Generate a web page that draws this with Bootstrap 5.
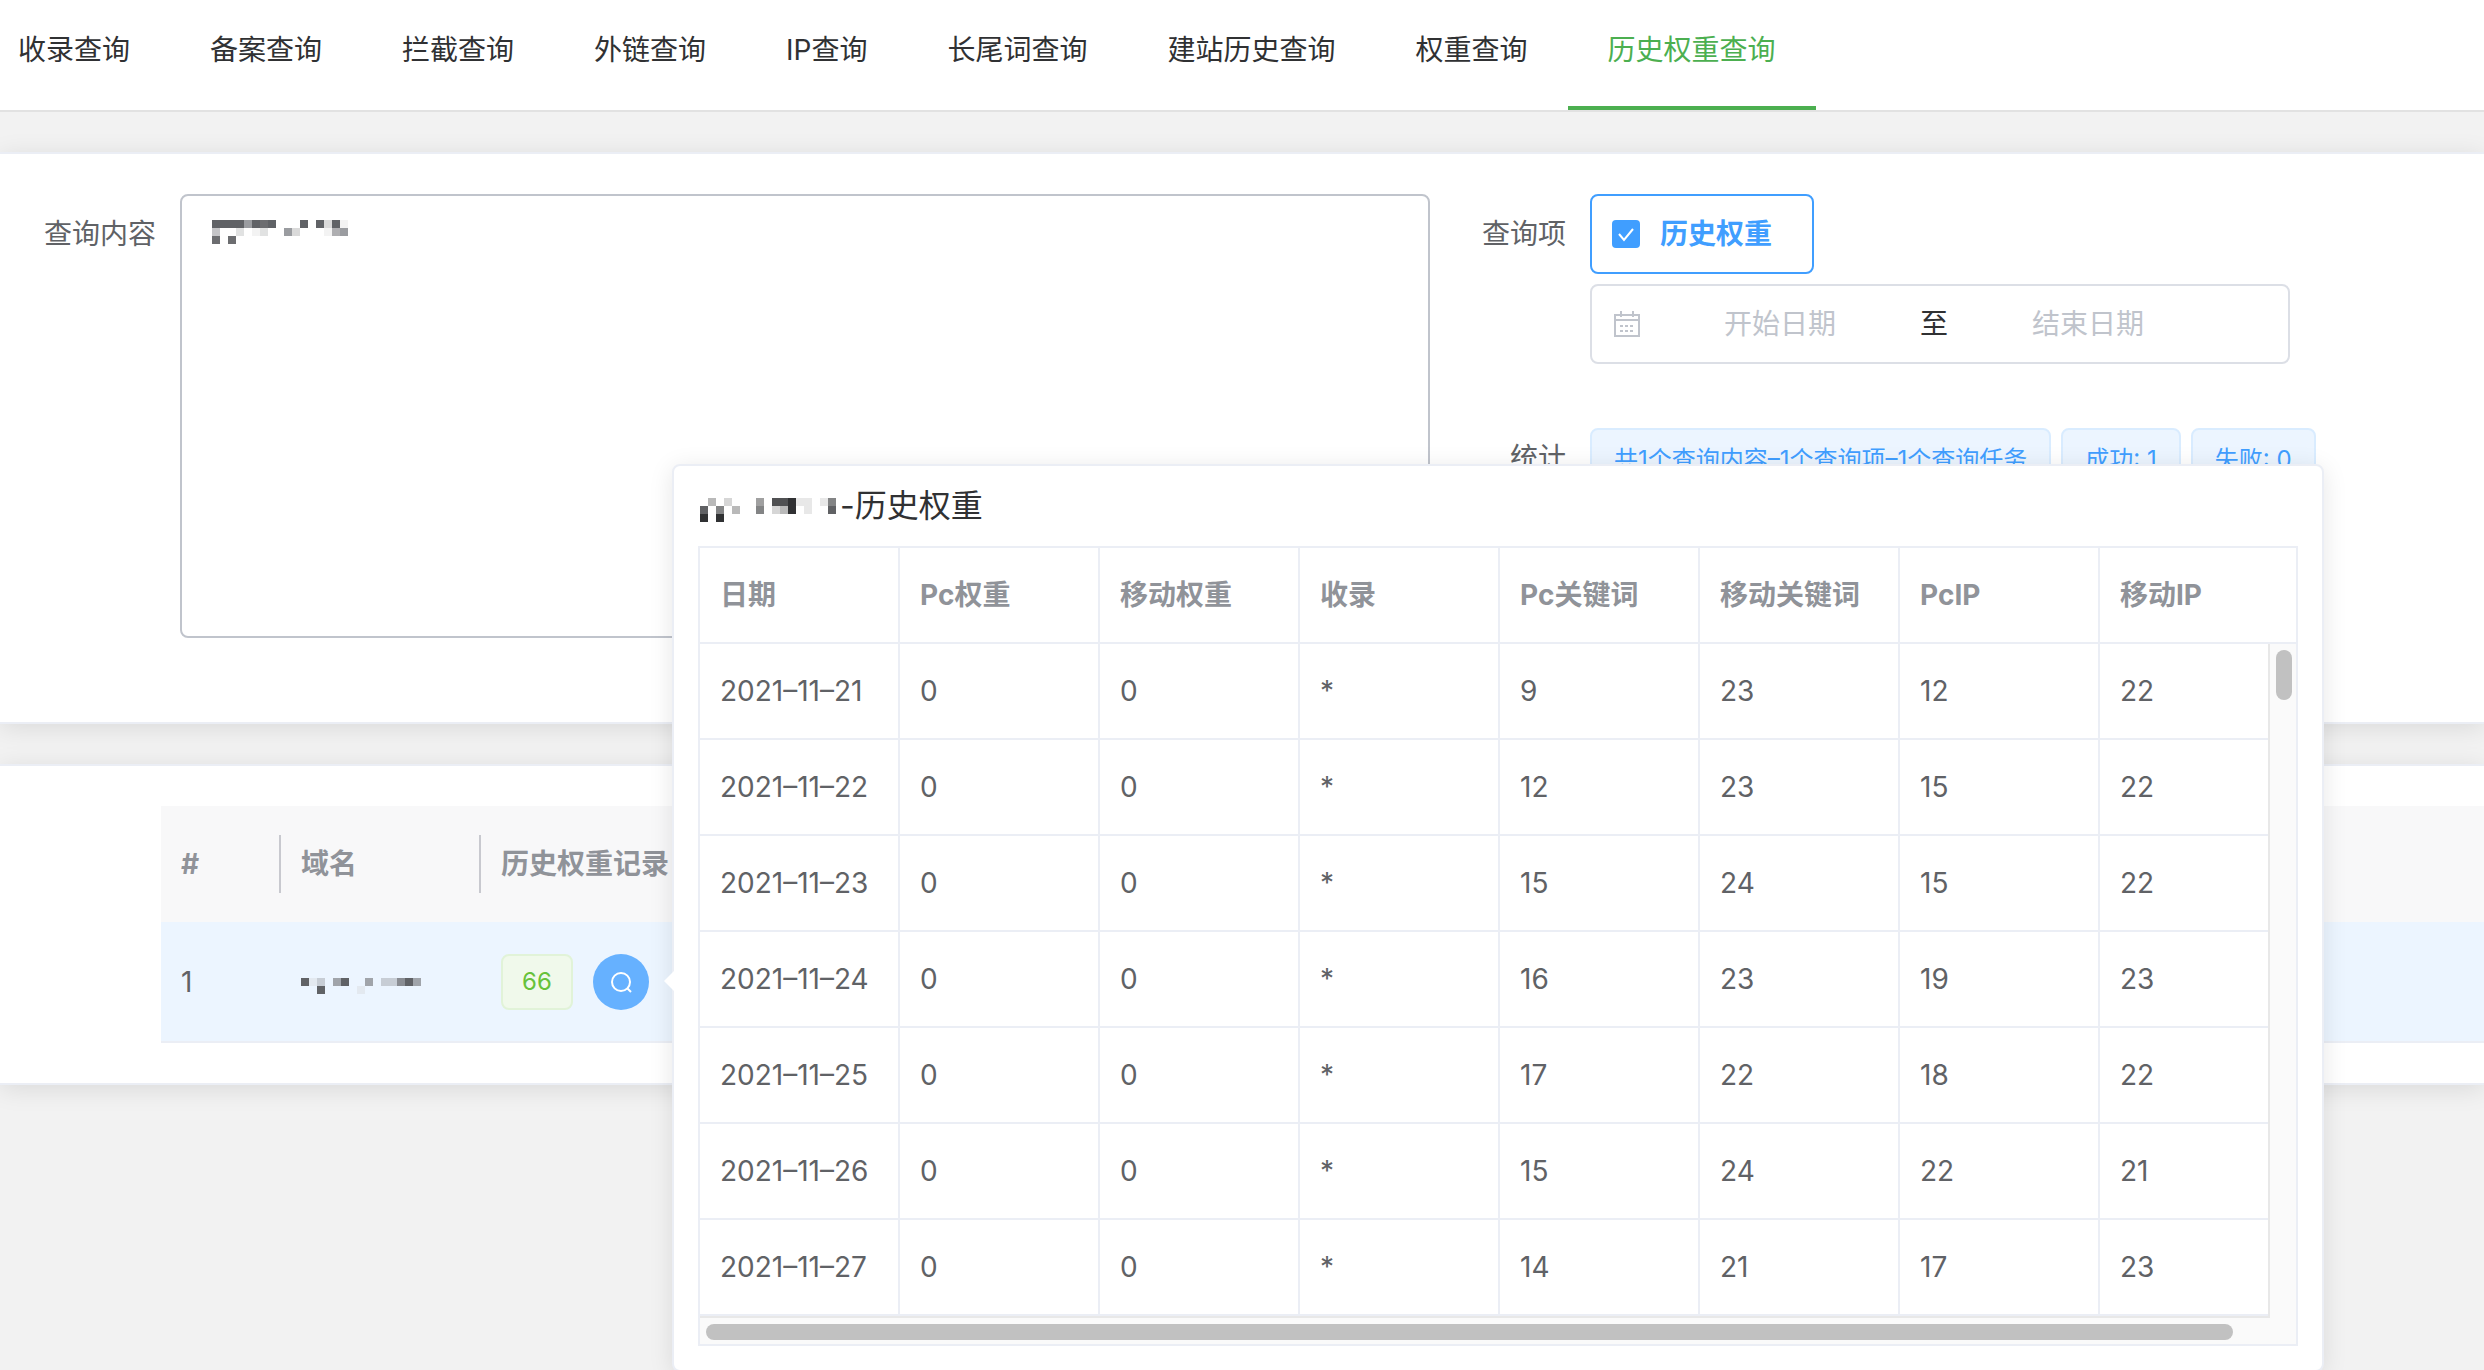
<!DOCTYPE html>
<html lang="zh-CN">
<head>
<meta charset="utf-8">
<meta name="viewport" content="width=device-width, initial-scale=1">
<title>历史权重查询</title>
<link href="https://cdn.jsdelivr.net/npm/bootstrap@5.3.0/dist/css/bootstrap.min.css" rel="stylesheet">
<style>
body { background: #f2f2f2; color: #606266; font-family: Inter, "Noto Sans CJK SC", sans-serif; font-size: 28px; line-height: 40px; }
.page-shell { min-height: 100vh; }
.top-tabs { height: 112px; border-bottom: 2px solid #e2e2e2; margin-bottom: 40px; padding-right: 40px; }
.top-tabs ul { margin-left: -22px; }
.top-tabs .nav-link { height: 110px; padding: 30px 40px; color: #303133; border-bottom: 4px solid transparent; border-radius: 0; white-space: nowrap; }
.top-tabs .nav-link.active { color: #4caf50; border-bottom-color: #4caf50; }
.panel { background: #fff; border: solid #ebeef5; border-width: 2px 0; box-shadow: 0 4px 24px rgba(0, 0, 0, .1); margin-bottom: 40px; padding: 40px 0; }
.query-panel { padding-bottom: 84px; }
.field-label { flex: 0 0 180px; padding: 20px 24px 0 0; text-align: right; }
.side-fields { flex: 0 0 1054px; }
.side-fields .field-label { flex-basis: 160px; }
.side-fields .stat-label { padding-top: 10px; }
.query-text { height: 444px; border: 2px solid #c0c4cc; border-radius: 8px; resize: none; }
.mosaic { display: block; shape-rendering: crispEdges; }
.over-text { left: 32px; top: 26px; }
.check-box { height: 80px; padding: 0 40px 0 20px; border: 2px solid #409eff; border-radius: 8px; color: #409eff; font-weight: 700; }
.check-box .form-check-input { width: 28px; height: 28px; margin: 0 20px 0 0; border: 0; border-radius: 4px; background-color: #409eff; }
.check-box .form-check-input:checked { background-size: 28px; background-image: url("data:image/svg+xml,%3Csvg xmlns='http://www.w3.org/2000/svg' viewBox='0 0 28 28'%3E%3Cpath d='M7 14l5 6 9-11' fill='none' stroke='%23fff' stroke-width='2'/%3E%3C/svg%3E"); }
.date-range { width: 700px; height: 80px; margin-top: 10px; margin-bottom: 64px; padding-left: 20px; border: 2px solid #dcdfe6; border-radius: 8px; color: #303133; }
.date-range input { width: 280px; padding: 0; border: 0; background: none; text-align: center; outline: 0; }
.date-range input::placeholder { color: #c0c4cc; opacity: 1; }
.stat-tags { gap: 10px; }
.stat-tag { height: 64px; padding: 0 22px; border: 2px solid #d9ecff; border-radius: 8px; background: #ecf5ff; color: #409eff; font-size: 24px; line-height: 60px; white-space: nowrap; }
.result-wrap { padding-left: 161px; }
.result-table { table-layout: fixed; width: 100%; }
.result-table th { height: 116px; padding: 0 20px; background: #f8f8f9; color: #909399; position: relative; white-space: nowrap; }
.result-table .split::after { content: ""; position: absolute; right: 0; top: 29px; width: 2px; height: 58px; background: #c8c9cf; }
.result-table td { height: 120px; padding: 0 20px; background: #ecf5ff; border-bottom: 2px solid #ebeef5; }
.result-table .domain-cell { padding-top: 8px; }
.count-tag { width: 72px; height: 56px; border: 2px solid #e1f3d8; border-radius: 8px; background: #f0f9eb; color: #67c23a; font-size: 24px; line-height: 52px; text-align: center; }
.look-btn { width: 56px; height: 56px; margin-left: 20px; border: 0; border-radius: 50%; background: #66b1ff; }
.history-pop { left: 672px; top: 464px; width: 1652px; padding: 24px; background: #fff; border: 2px solid #ebeef5; border-radius: 8px; box-shadow: 0 4px 24px rgba(0, 0, 0, .1); }
.history-pop::before { content: ""; position: absolute; left: -10px; top: 505px; border: solid transparent; border-width: 10px 10px 10px 0; border-right-color: #fff; }
.pop-title { font-size: 32px; line-height: 32px; color: #303133; margin-bottom: 24px; padding-left: 2px; }
.grid-frame { border: 2px solid #ebeef5; }
.hist-table { table-layout: fixed; width: 100%; border-collapse: separate; border-spacing: 0; }
.hist-table th, .hist-table td { height: 96px; padding: 0 20px; border-bottom: 2px solid #ebeef5; border-right: 2px solid #ebeef5; white-space: nowrap; }
.hist-table th { color: #909399; }
.hist-table th:last-child, .hist-table td:last-child { border-right: 0; }
.track-y { flex: 0 0 28px; border-left: 2px solid #e8e8e8; background: #fafafa; padding: 6px 4px 0 6px; }
.thumb-y { width: 16px; height: 50px; border-radius: 8px; background: #c1c1c1; }
.track-x { height: 28px; margin-right: 26px; border-top: 2px solid #e8e8e8; background: #fafafa; padding: 6px; }
.track-row { background: #fafafa; }
.thumb-x { width: 98%; height: 16px; border-radius: 8px; background: #c1c1c1; }
</style>
</head>
<body>
<div class="page-shell position-relative overflow-hidden">
  <nav class="top-tabs bg-white">
    <ul class="nav flex-nowrap">
      <li class="nav-item"><a class="nav-link" href="#">收录查询</a></li>
      <li class="nav-item"><a class="nav-link" href="#">备案查询</a></li>
      <li class="nav-item"><a class="nav-link" href="#">拦截查询</a></li>
      <li class="nav-item"><a class="nav-link" href="#">外链查询</a></li>
      <li class="nav-item"><a class="nav-link" href="#">IP查询</a></li>
      <li class="nav-item"><a class="nav-link" href="#">长尾词查询</a></li>
      <li class="nav-item"><a class="nav-link" href="#">建站历史查询</a></li>
      <li class="nav-item"><a class="nav-link" href="#">权重查询</a></li>
      <li class="nav-item"><a class="nav-link active" aria-current="page" href="#">历史权重查询</a></li>
    </ul>
  </nav>

  <section class="panel query-panel d-flex">
    <div class="d-flex flex-grow-1">
      <label class="field-label" for="queryText">查询内容</label>
      <div class="flex-grow-1 position-relative">
        <textarea class="query-text d-block w-100" id="queryText"></textarea>
        <svg class="mosaic over-text position-absolute" width="136" height="24" viewBox="0 0 17 3" aria-hidden="true">
          <path fill="#606266" d="M0 0h4v1H0zM5 0h1v1H5zM7 0h1v1H7zM11 0h1v1h-1zM13 0h1v1h-1zM15 0h1v1h-1z"/>
          <path fill="#9a9ca0" d="M4 0h1v1H4zM9 1h1v1H9zM16 1h1v1h-1z"/>
          <path fill="#6c6d70" d="M6 0h1v1H6zM0 2h1v1H0zM2 2h1v1H2z"/>
          <path fill="#dadada" d="M14 0h1v1h-1zM10 1h1v1h-1z"/>
          <path fill="#f3f3f3" d="M16 0h1v1h-1zM5 1h1v1H5zM14 1h1v1h-1z"/>
          <path fill="#c4c4c7" d="M0 1h1v1H0z"/><path fill="#e1e2e2" d="M3 1h1v1H3zM6 1h1v1H6z"/>
          <path fill="#aeaeb1" d="M15 1h1v1h-1z"/>
        </svg>
      </div>
    </div>
    <div class="side-fields">
      <div class="d-flex">
        <span class="field-label">查询项</span>
        <div>
          <label class="check-box d-inline-flex align-items-center"><input class="form-check-input" type="checkbox" checked>历史权重</label>
          <div class="date-range d-flex align-items-center">
            <svg width="28" height="28" viewBox="0 0 28 28" fill="none" stroke="#c0c4cc" stroke-width="2" aria-hidden="true">
              <path d="M3 5h24v21H3zM3 10h24M9 1v6M21 1v6"/><path stroke-dasharray="3 2" d="M8 16h14M8 21h14"/>
            </svg>
            <input type="text" placeholder="开始日期" aria-label="开始日期">
            <span>至</span>
            <input type="text" placeholder="结束日期" aria-label="结束日期">
          </div>
        </div>
      </div>
      <div class="d-flex">
        <span class="field-label stat-label">统计</span>
        <div class="stat-tags d-flex">
          <span class="stat-tag">共1个查询内容–1个查询项–1个查询任务</span>
          <span class="stat-tag">成功: 1</span>
          <span class="stat-tag">失败: 0</span>
        </div>
      </div>
    </div>
  </section>

  <section class="panel result-wrap">
    <table class="result-table">
      <colgroup><col style="width:120px"><col style="width:200px"><col></colgroup>
      <thead><tr><th class="split">#</th><th class="split">域名</th><th>历史权重记录</th></tr></thead>
      <tbody><tr>
        <td>1</td>
        <td class="domain-cell">
          <svg class="mosaic" width="120" height="16" viewBox="0 0 15 2" aria-hidden="true">
            <path fill="#606266" d="M0 0h1v1H0zM5 0h1v1H5zM13 0h1v1h-1zM2 1h1v1H2z"/>
            <path fill="#e3e9f0" d="M1 0h1v1H1zM7 1h1v1H7z"/>
            <path fill="#c7cdd5" d="M2 0h1v1H2zM10 0h2v1h-2z"/>
            <path fill="#a0a4aa" d="M4 0h1v1H4zM8 0h1v1H8zM14 0h1v1h-1z"/>
            <path fill="#898c92" d="M12 0h1v1h-1z"/>
          </svg>
        </td>
        <td>
          <div class="d-flex align-items-center">
            <span class="count-tag">66</span>
            <button class="look-btn d-flex align-items-center justify-content-center p-0" type="button" aria-label="查看历史权重">
              <svg width="24" height="24" viewBox="0 0 24 24" fill="none" stroke="#fff" stroke-width="2" aria-hidden="true"><circle cx="12" cy="12" r="9"/><path d="M18 18l4 4"/></svg>
            </button>
          </div>
        </td>
      </tr></tbody>
    </table>
  </section>

  <div class="history-pop position-absolute" role="dialog" aria-label="历史权重">
    <div class="pop-title d-flex">
      <svg class="mosaic mt-2" width="136" height="24" viewBox="0 0 17 3" aria-hidden="true">
        <path fill="#303133" d="M11 0h1v2h-1zM0 2h1v1H0zM2 2h1v1H2z"/>
        <path fill="#505153" d="M9 0h2v1H9z"/>
        <path fill="#606164" d="M0 1h1v1H0zM16 1h1v1h-1z"/>
        <path fill="#838485" d="M2 1h1v1H2zM7 1h1v1H7zM16 0h1v1h-1z"/>
        <path fill="#a0a0a0" d="M7 0h1v1H7z"/>
        <path fill="#b9b9b9" d="M1 0h1v1H1zM4 1h1v1H4zM10 1h1v1h-1z"/>
        <path fill="#d6d6d6" d="M3 0h1v1H3zM9 1h1v1H9z"/>
        <path fill="#e8e8e8" d="M12 0h1v1h-1zM13 0h1v2h-1zM15 0h1v1h-1z"/>
      </svg>
      <span class="ms-1">-历史权重</span>
    </div>
    <div class="grid-frame">
      <table class="hist-table">
        <colgroup><col style="width:200px"><col style="width:200px"><col style="width:200px"><col style="width:200px"><col style="width:200px"><col style="width:200px"><col style="width:200px"><col></colgroup>
        <thead><tr><th>日期</th><th>Pc权重</th><th>移动权重</th><th>收录</th><th>Pc关键词</th><th>移动关键词</th><th>PcIP</th><th>移动IP</th></tr></thead>
      </table>
      <div class="d-flex">
        <table class="hist-table">
          <colgroup><col style="width:200px"><col style="width:200px"><col style="width:200px"><col style="width:200px"><col style="width:200px"><col style="width:200px"><col style="width:200px"><col></colgroup>
          <tbody>
            <tr><td>2021–11–21</td><td>0</td><td>0</td><td>*</td><td>9</td><td>23</td><td>12</td><td>22</td></tr>
            <tr><td>2021–11–22</td><td>0</td><td>0</td><td>*</td><td>12</td><td>23</td><td>15</td><td>22</td></tr>
            <tr><td>2021–11–23</td><td>0</td><td>0</td><td>*</td><td>15</td><td>24</td><td>15</td><td>22</td></tr>
            <tr><td>2021–11–24</td><td>0</td><td>0</td><td>*</td><td>16</td><td>23</td><td>19</td><td>23</td></tr>
            <tr><td>2021–11–25</td><td>0</td><td>0</td><td>*</td><td>17</td><td>22</td><td>18</td><td>22</td></tr>
            <tr><td>2021–11–26</td><td>0</td><td>0</td><td>*</td><td>15</td><td>24</td><td>22</td><td>21</td></tr>
            <tr><td>2021–11–27</td><td>0</td><td>0</td><td>*</td><td>14</td><td>21</td><td>17</td><td>23</td></tr>
          </tbody>
        </table>
        <div class="track-y"><div class="thumb-y"></div></div>
      </div>
      <div class="track-row"><div class="track-x"><div class="thumb-x"></div></div></div>
    </div>
  </div>
</div>
<script src="https://cdn.jsdelivr.net/npm/bootstrap@5.3.0/dist/js/bootstrap.bundle.min.js"></script>
</body>
</html>
